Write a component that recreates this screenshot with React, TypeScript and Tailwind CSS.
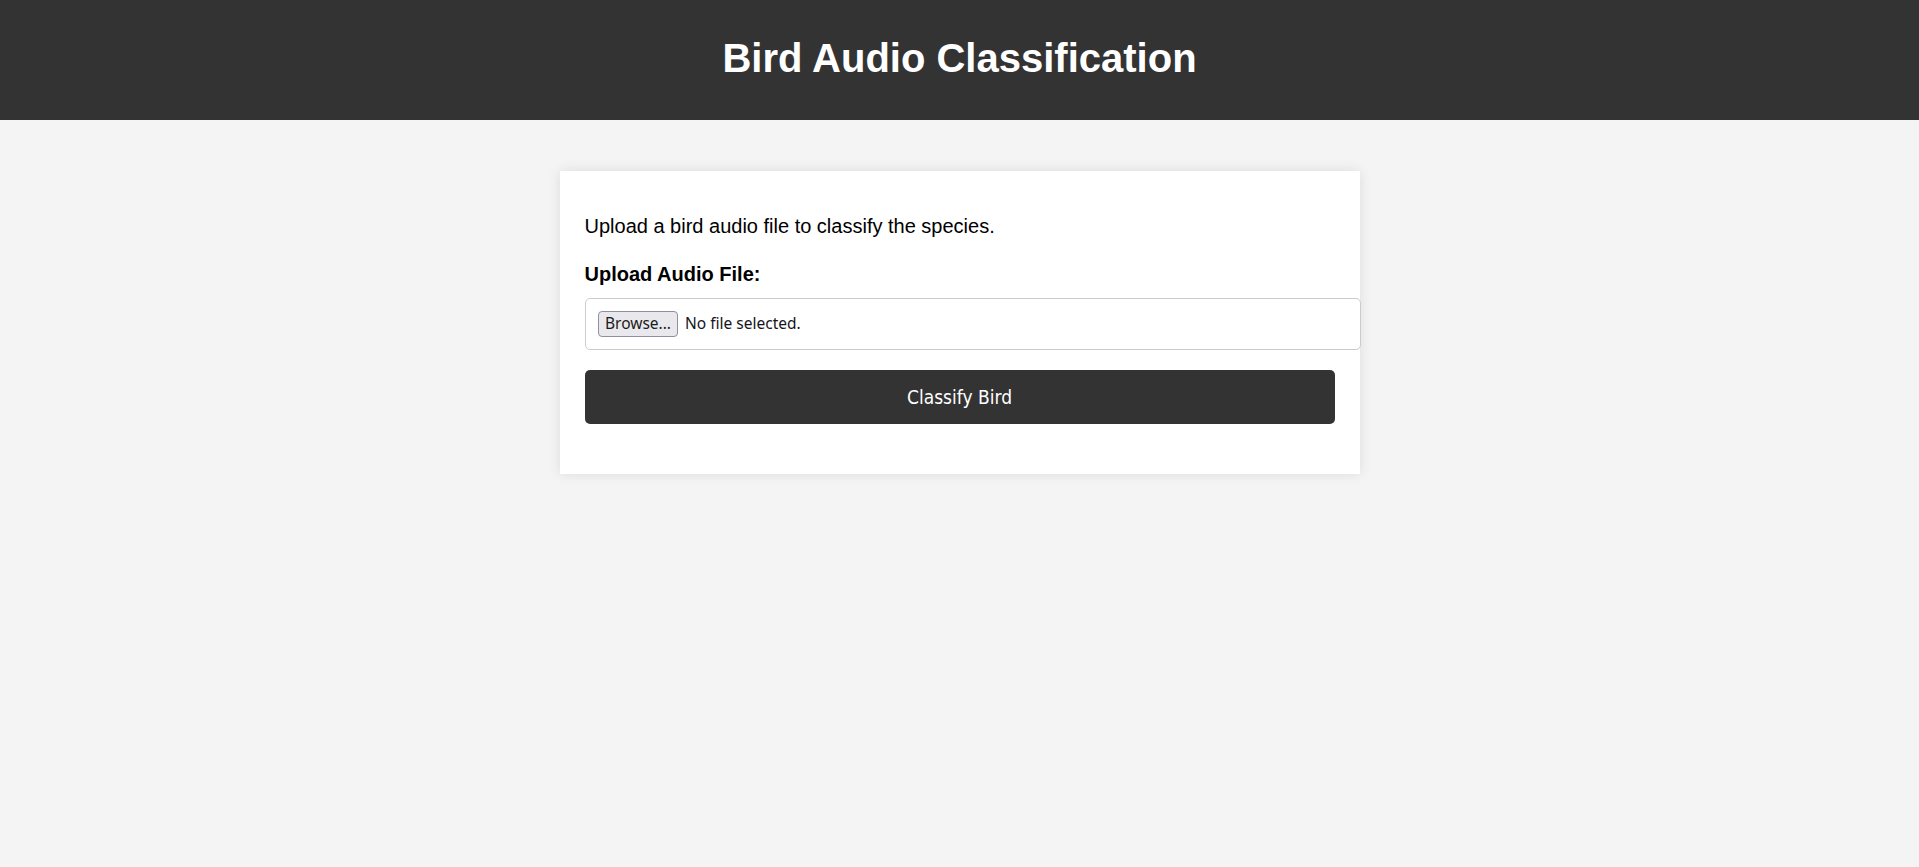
export default function App() {
  return (
    <div className="min-h-screen bg-[#f4f4f4] font-['Liberation_Sans',Arial,sans-serif] text-black">
      {/* Header */}
      <header className="h-[120px] bg-[#333333] pt-[35px] text-center">
        <h1 className="text-[40px] font-bold leading-[46px] text-white">Bird Audio Classification</h1>
      </header>

      {/* Card */}
      <main className="mx-auto mt-[51px] w-[800px] bg-white px-[25px] pt-[44px] pb-[50px] shadow-[0_0_12px_rgba(0,0,0,0.1)]">
        <p className="text-[20px] leading-[23px]">Upload a bird audio file to classify the species.</p>

        <label className="mt-[25px] mb-[12px] block text-[20px] font-bold leading-[23px]">Upload Audio File:</label>

        <div className="flex h-[51.5px] w-[776px] items-center gap-[7px] rounded-[5px] border border-[#cccccc] bg-white px-[12.5px] font-['Noto_Sans',sans-serif] text-[15.5px]">
          <span className="flex h-[26px] w-[80px] items-center justify-center rounded-[4px] border border-[#8f8f9d] bg-[#e9e9ed] text-[#1b1b1b]">
            Browse...
          </span>
          <span className="text-[#15141a]">No file selected.</span>
        </div>

        <button
          type="button"
          className="mt-[20.5px] flex h-[54px] w-full items-center justify-center rounded-[5px] bg-[#333333] font-['DejaVu_Sans_Condensed','Noto_Sans',sans-serif] text-[19px] text-white"
        >
          Classify Bird
        </button>
      </main>
    </div>
  );
}
